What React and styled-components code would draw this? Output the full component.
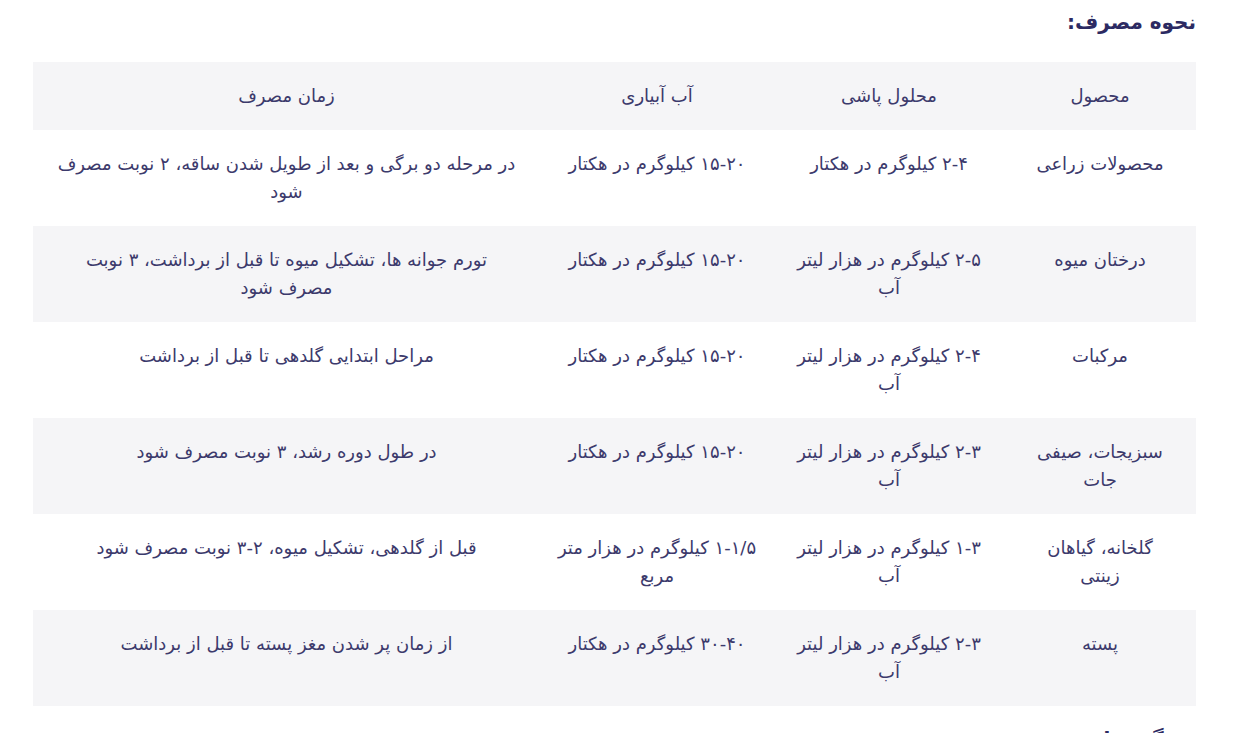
import React from "react";
import styled, { createGlobalStyle } from "styled-components";

const Global = createGlobalStyle`
  html, body { margin: 0; padding: 0; background: #ffffff; }
  body { font-family: "DejaVu Sans", "Noto Sans", sans-serif; overflow: hidden; }
`;

const Page = styled.div`
  direction: rtl;
  padding: 0 44px 0 33px;
  height: 733px;
  overflow: hidden;
`;

const Heading = styled.h3`
  margin: 0;
  padding: 7px 0 0;
  height: 62px;
  box-sizing: border-box;
  font-size: 20px;
  line-height: 30px;
  font-weight: bold;
  color: #2c2a62;
`;

const Table = styled.table`
  width: 100%;
  border-collapse: collapse;
  table-layout: fixed;
`;

const Col = styled.col`
  width: ${(p) => p.$w}px;
`;

const Row = styled.tr`
  background: ${(p) => (p.$shaded ? "#f5f5f7" : "#ffffff")};
`;

const HeadCell = styled.th`
  padding: 20px 12px;
  font-weight: normal;
  font-size: 18px;
  line-height: 28px;
  color: #3c3a6c;
  text-align: center;
  vertical-align: middle;
`;

const Cell = styled.td`
  padding: 20px ${(p) => p.$pad}px;
  font-size: 18px;
  line-height: 28px;
  color: #3c3a6c;
  text-align: center;
  vertical-align: top;
`;

const NextHeading = styled.h3`
  margin: 18px 0 0;
  font-size: 20px;
  line-height: 30px;
  font-weight: bold;
  color: #2c2a62;
`;

const headers = ["محصول", "محلول پاشی", "آب آبیاری", "زمان مصرف"];

const rows = [
  ["محصولات زراعی", "۲-۴ کیلوگرم در هکتار", "۱۵-۲۰ کیلوگرم در هکتار", "در مرحله دو برگی و بعد از طویل شدن ساقه، ۲ نوبت مصرف شود"],
  ["درختان میوه", "۲-۵ کیلوگرم در هزار لیتر آب", "۱۵-۲۰ کیلوگرم در هکتار", "تورم جوانه ها، تشکیل میوه تا قبل از برداشت، ۳ نوبت مصرف شود"],
  ["مرکبات", "۲-۴ کیلوگرم در هزار لیتر آب", "۱۵-۲۰ کیلوگرم در هکتار", "مراحل ابتدایی گلدهی تا قبل از برداشت"],
  ["سبزیجات، صیفی جات", "۲-۳ کیلوگرم در هزار لیتر آب", "۱۵-۲۰ کیلوگرم در هکتار", "در طول دوره رشد، ۳ نوبت مصرف شود"],
  ["گلخانه، گیاهان زینتی", "۱-۳ کیلوگرم در هزار لیتر آب", "۱-۱/۵ کیلوگرم در هزار متر مربع", "قبل از گلدهی، تشکیل میوه، ۲-۳ نوبت مصرف شود"],
  ["پسته", "۲-۳ کیلوگرم در هزار لیتر آب", "۳۰-۴۰ کیلوگرم در هکتار", "از زمان پر شدن مغز پسته تا قبل از برداشت"],
];

const widths = [192, 230, 234, 507];
const pads = [28, 20, 16, 23.5];

export default function App() {
  return (
    <>
      <Global />
      <Page>
        <Heading>نحوه مصرف:</Heading>
        <Table>
          <colgroup>
            {widths.map((w, i) => (
              <Col key={i} $w={w} />
            ))}
          </colgroup>
          <thead>
            <Row $shaded>
              {headers.map((h) => (
                <HeadCell key={h}>{h}</HeadCell>
              ))}
            </Row>
          </thead>
          <tbody>
            {rows.map((r, i) => (
              <Row key={i} $shaded={i % 2 === 1}>
                {r.map((c, j) => (
                  <Cell key={j} $pad={pads[j]}>{c}</Cell>
                ))}
              </Row>
            ))}
          </tbody>
        </Table>
        <NextHeading>ویژگی ها:</NextHeading>
      </Page>
    </>
  );
}
